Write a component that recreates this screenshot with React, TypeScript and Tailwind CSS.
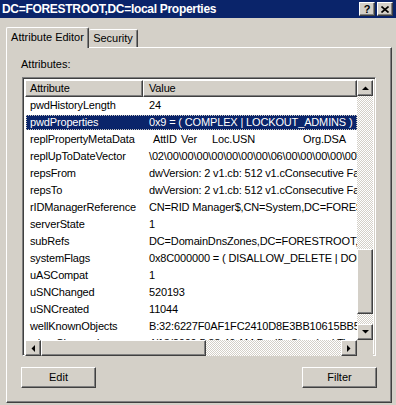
import React from "react";

const ROWS: [string, React.ReactNode][] = [
  ["pwdHistoryLength", "24"],
  ["pwdProperties", "0x9 = ( COMPLEX | LOCKOUT_ADMINS )"],
  [
    "replPropertyMetaData",
    <span className="flex">
      <span className="w-[4px]" />
      <span className="w-[28px]">AttID</span>
      <span className="w-[31px]">Ver</span>
      <span className="w-[91px]">Loc.USN</span>
      <span>Org.DSA</span>
    </span>,
  ],
  ["replUpToDateVector", "\\02\\00\\00\\00\\00\\00\\00\\00\\06\\00\\00\\00\\00\\00\\00\\00"],
  ["repsFrom", "dwVersion: 2 v1.cb: 512 v1.cConsecutive Failures: 0"],
  ["repsTo", "dwVersion: 2 v1.cb: 512 v1.cConsecutive Failures: 0"],
  ["rIDManagerReference", "CN=RID Manager$,CN=System,DC=FORESTROOT,DC=local"],
  ["serverState", "1"],
  ["subRefs", "DC=DomainDnsZones,DC=FORESTROOT,DC=local"],
  ["systemFlags", "0x8C000000 = ( DISALLOW_DELETE | DOMAIN_DISALLOW_RENAME )"],
  ["uASCompat", "1"],
  ["uSNChanged", "520193"],
  ["uSNCreated", "11044"],
  ["wellKnownObjects", "B:32:6227F0AF1FC2410D8E3BB10615BB5EA0:CN=Users"],
  ["whenChanged", "4/13/2009 5:38:40 AM Pacific Standard Time"],
];

// classic raised 3D edge
const raised =
  "bg-[#d4d0c8] border border-t-white border-l-white border-r-[#404040] border-b-[#404040] shadow-[inset_-1px_-1px_#808080]";

const checker =
  "bg-[repeating-conic-gradient(#ffffff_0_25%,#d4d0c8_0_50%)] bg-[length:2px_2px]";

function Arrow({ dir }: { dir: "up" | "down" | "left" | "right" }) {
  const pts = {
    up: "0,4 7,4 3.5,0.5",
    down: "0,0 7,0 3.5,3.5",
    left: "4,0 4,7 0.5,3.5",
    right: "0,0 0,7 3.5,3.5",
  }[dir];
  const vertical = dir === "up" || dir === "down";
  return (
    <svg width={vertical ? 7 : 4} height={vertical ? 4 : 7} viewBox={vertical ? "0 0 7 4" : "0 0 4 7"}>
      <polygon points={pts} fill="#000" />
    </svg>
  );
}

function ScrollBtn({ dir }: { dir: "up" | "down" | "left" | "right" }) {
  return (
    <div className={`w-[16px] h-[16px] shrink-0 flex items-center justify-center ${raised}`}>
      <Arrow dir={dir} />
    </div>
  );
}

function Button({ label }: { label: string }) {
  return (
    <div className={`w-[75px] h-[21px] flex items-center justify-center text-[11px] ${raised}`}>
      {label}
    </div>
  );
}

export default function App() {
  return (
    <div className="w-[396px] h-[405px] bg-[#d4d0c8] overflow-hidden text-[11px] text-black font-['Liberation_Sans',Arial,sans-serif] leading-none">
      {/* Title bar */}
      <div className="h-[18px] bg-[#0a246a] flex items-center justify-between pl-[2px] pr-[3px]">
        <span className="text-white font-bold text-[12px] tracking-[-0.3px]">
          DC=FORESTROOT,DC=local Properties
        </span>
        <div className="flex gap-[2px]">
          <div className={`w-[16px] h-[14px] flex items-center justify-center font-bold text-[11px] ${raised}`}>
            ?
          </div>
          <div className={`w-[16px] h-[14px] flex items-center justify-center ${raised}`}>
            <svg width="8" height="7" viewBox="0 0 8 7">
              <path d="M0.5 0.5 L7.5 6.5 M7.5 0.5 L0.5 6.5" stroke="#000" strokeWidth="1.6" />
            </svg>
          </div>
        </div>
      </div>

      {/* Tabs */}
      <div className="ml-[6px] mt-[9px] h-[20px] flex items-end">
        <div className="relative z-10 -mb-[1px] h-[21px] w-[83px] bg-[#d4d0c8] border-t border-l border-white border-r border-r-[#404040] rounded-t-[2px] shadow-[inset_-1px_0_#808080] flex items-start justify-center pt-[4px]">
          Attribute Editor
        </div>
        <div className="h-[18px] w-[49px] bg-[#d4d0c8] border-t border-white border-r border-r-[#404040] rounded-t-[2px] shadow-[inset_-1px_0_#808080] flex items-start justify-center pt-[3px]">
          Security
        </div>
      </div>

      {/* Tab panel */}
      <div className="ml-[6px] w-[386px] h-[356px] border border-t-white border-l-white border-r-[#404040] border-b-[#404040] shadow-[inset_-1px_-1px_#808080]">
        <div className="ml-[14px] mt-[11px] h-[13px]">Attributes:</div>

        {/* List view */}
        <div className="ml-[15px] mt-[5px] w-[354px] h-[279px] bg-white border border-t-[#808080] border-l-[#808080] border-r-white border-b-white shadow-[inset_1px_1px_#404040,inset_-1px_-1px_#d4d0c8] p-[1px] flex flex-col">
          <div className="flex h-[260px] ml-[1px] mt-[1px] mr-[1px]">
            <div className="w-[334px] overflow-hidden flex flex-col tracking-[-0.15px]">
              <div className="flex h-[17px] shrink-0">
                <div className={`w-[118px] h-full flex items-center pl-[4px] ${raised}`}>Attribute</div>
                <div className={`flex-1 h-full flex items-center pl-[5px] ${raised}`}>Value</div>
              </div>
              {ROWS.map(([name, value], i) => {
                const sel = i === 1;
                return (
                  <div key={name} className="h-[17px] shrink-0 flex items-center">
                    <div
                      className={`flex items-center h-[15px] ml-[1px] w-full whitespace-nowrap ${
                        sel
                          ? "bg-[#0a246a] text-white outline-1 outline-dotted outline-[#c8c4bc] -outline-offset-1"
                          : ""
                      }`}
                    >
                      <div className="w-[117px] pl-[4px] shrink-0">{name}</div>
                      <div className="pl-[6px] whitespace-pre">{value}</div>
                    </div>
                  </div>
                );
              })}
            </div>
            {/* Vertical scrollbar */}
            <div className="w-[16px] flex flex-col">
              <ScrollBtn dir="up" />
              <div className={`h-[153px] ${checker}`} />
              <div className={`h-[65px] ${raised}`} />
              <div className={`h-[10px] ${checker}`} />
              <ScrollBtn dir="down" />
            </div>
          </div>
          {/* Horizontal scrollbar */}
          <div className="flex h-[16px] ml-[1px] mr-[1px]">
            <ScrollBtn dir="left" />
            <div className={`w-[166px] h-[16px] ${raised}`} />
            <div className={`w-[136px] h-[16px] ${checker}`} />
            <ScrollBtn dir="right" />
            <div className="w-[16px] h-[16px] bg-[#d4d0c8]" />
          </div>
        </div>

        {/* Buttons */}
        <div className="mt-[11px] ml-[14px] mr-[14px] flex justify-between">
          <Button label="Edit" />
          <Button label="Filter" />
        </div>
      </div>
    </div>
  );
}
